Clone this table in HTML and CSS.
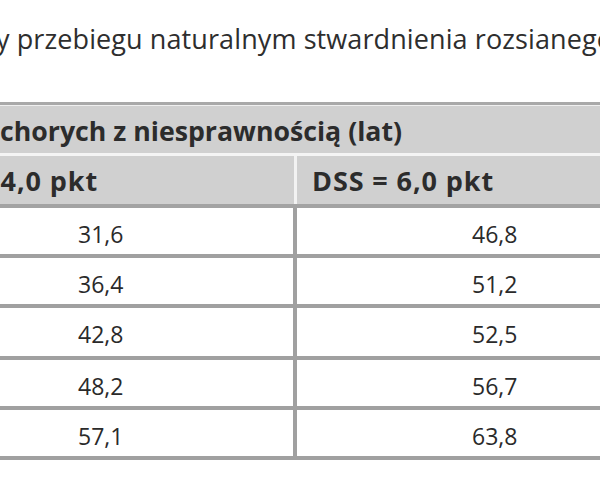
FILE: index.html
```html
<!DOCTYPE html>
<html lang="pl">
<head>
<meta charset="utf-8">
<title>Tabela</title>
<link rel="stylesheet" href="styles.css">
</head>
<body>
<div class="page">
  <p class="caption">y przebiegu naturalnym stwardnienia rozsianego</p>
  <div class="table">
    <div class="rule"></div>
    <div class="head1">chorych z niesprawnością (lat)</div>
    <div class="head2">
      <div class="hcell left">DSS = 4,0 pkt</div>
      <div class="hcell right">DSS = 6,0 pkt</div>
    </div>
    <div class="row"><div class="cell left">31,6</div><div class="cell right">46,8</div></div>
    <div class="row"><div class="cell left">36,4</div><div class="cell right">51,2</div></div>
    <div class="row"><div class="cell left">42,8</div><div class="cell right">52,5</div></div>
    <div class="row"><div class="cell left">48,2</div><div class="cell right">56,7</div></div>
    <div class="row"><div class="cell left">57,1</div><div class="cell right">63,8</div></div>
  </div>
</div>
</body>
</html>
```
FILE: styles.css
```css
html, body {
  margin: 0;
  padding: 0;
  background: #ffffff;
}
body {
  width: 600px;
  height: 480px;
  overflow: hidden;
  font-family: "Open Sans", "Noto Sans", sans-serif;
  color: #2c2c2c;
}
.page {
  padding-top: 22px;
}
.caption {
  margin: 0 0 0 -4px;
  font-size: 27px;
  line-height: 34px;
  white-space: nowrap;
  color: #2e2e2e;
  letter-spacing: 0.1px;
}
.table {
  margin-top: 46px;
  margin-left: -95px;
  width: 800px;
}
.rule {
  height: 3px;
  background: #a9a9a9;
  border-bottom: 1px solid #efefef;
}
.head1 {
  height: 47px;
  background: #d0d0d0;
  font-weight: 700;
  font-size: 26.7px;
  line-height: 49px;
  padding-left: 95px;
  border-bottom: 3px solid #f4f4f4;
  white-space: nowrap;
}
.head2 {
  display: grid;
  grid-template-columns: 392px 1fr;
  background: #d0d0d0;
  border-bottom: 4px solid #a3a3a3;
}
.hcell {
  height: 48px;
  line-height: 49px;
  font-weight: 700;
  font-size: 27px;
  letter-spacing: 0.9px;
  padding-left: 15px;
  white-space: nowrap;
}
.hcell.left {
  padding-left: 11px;
  border-right: 3px solid #f2f2f2;
}
.row {
  display: grid;
  grid-template-columns: 392px 1fr;
  border-bottom: 4px solid #a0a0a0;
}
.row:nth-child(6) .cell {
  height: 48px;
}
.cell {
  height: 46px;
  line-height: 52px;
  font-size: 23px;
  color: #2a2a2a;
  white-space: nowrap;
}
.cell.left {
  padding-left: 173px;
  border-right: 4px solid #a0a0a0;
}
.cell.right {
  padding-left: 175px;
}
```
